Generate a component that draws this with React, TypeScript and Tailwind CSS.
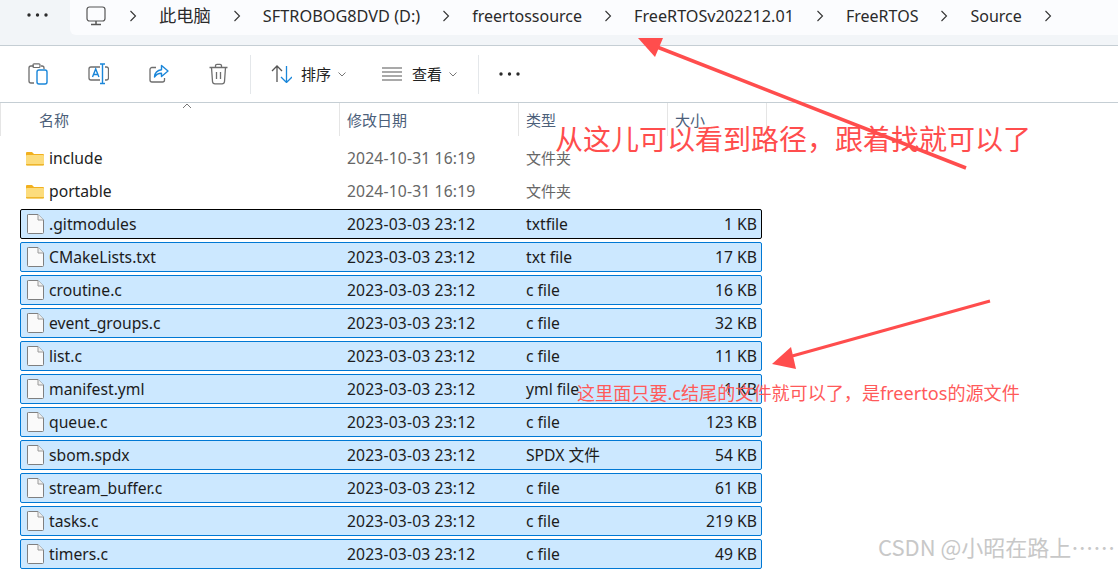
import React from "react";

const BASE = "font-['Noto_Sans','Noto_Sans_CJK_SC',sans-serif]";

const crumbs = [
  { label: "此电脑", size: "text-[17.300px]" },
  { label: "SFTROBOG8DVD (D:)", size: "text-[16.300px]" },
  { label: "freertossource", size: "text-[16px]" },
  { label: "FreeRTOSv202212.01", size: "text-[16.200px]" },
  { label: "FreeRTOS", size: "text-[16px]" },
  { label: "Source", size: "text-[16px]" },
];

const files = [
  { name: ".gitmodules", date: "2023-03-03 23:12", type: "txtfile", size: "1 KB", focus: true },
  { name: "CMakeLists.txt", date: "2023-03-03 23:12", type: "txt file", size: "17 KB" },
  { name: "croutine.c", date: "2023-03-03 23:12", type: "c file", size: "16 KB" },
  { name: "event_groups.c", date: "2023-03-03 23:12", type: "c file", size: "32 KB" },
  { name: "list.c", date: "2023-03-03 23:12", type: "c file", size: "11 KB" },
  { name: "manifest.yml", date: "2023-03-03 23:12", type: "yml file", size: "1 KB" },
  { name: "queue.c", date: "2023-03-03 23:12", type: "c file", size: "123 KB" },
  { name: "sbom.spdx", date: "2023-03-03 23:12", type: "SPDX 文件", size: "54 KB" },
  { name: "stream_buffer.c", date: "2023-03-03 23:12", type: "c file", size: "61 KB" },
  { name: "tasks.c", date: "2023-03-03 23:12", type: "c file", size: "219 KB" },
  { name: "timers.c", date: "2023-03-03 23:12", type: "c file", size: "49 KB" },
];

function Dots() {
  return (
    <svg width="21" height="4" viewBox="0 0 21 4" fill="#2b2b2b">
      <circle cx="2" cy="2" r="1.7" />
      <circle cx="10.5" cy="2" r="1.7" />
      <circle cx="19" cy="2" r="1.7" />
    </svg>
  );
}

function Chevron() {
  return (
    <svg width="8" height="12" viewBox="0 0 8 12" fill="none" stroke="#333" strokeWidth="1.1" className="shrink-0">
      <path d="M1.500 1l5 5-5 5" />
    </svg>
  );
}

function SmallChevron() {
  return (
    <svg width="8" height="5" viewBox="0 0 8 5" fill="none" stroke="#777" strokeWidth="1" className="shrink-0">
      <path d="M.5.5L4 4 7.5.5" />
    </svg>
  );
}

function FolderIcon() {
  return (
    <svg width="18" height="15" viewBox="0 0 18 15" className="shrink-0">
      <path d="M0 2a1 1 0 0 1 1-1h5l2 2h9a1 1 0 0 1 1 1v9a1 1 0 0 1-1 1H1a1 1 0 0 1-1-1z" fill="#f2b01e" />
      <path d="M0 5a1 1 0 0 1 1-1h16a1 1 0 0 1 1 1v8.500a1 1 0 0 1-1 1H1a1 1 0 0 1-1-1z" fill="#fcdc7c" />
      <path d="M0 13h18v.5a1 1 0 0 1-1 1H1a1 1 0 0 1-1-1z" fill="#eeb52c" />
    </svg>
  );
}

function FileIcon() {
  return (
    <svg width="17" height="20" viewBox="0 0 17 20" className="shrink-0">
      <path d="M1.500.5h9.500l5.500 5.500v12.500a1 1 0 0 1-1 1h-14a1 1 0 0 1-1-1v-17.500a.5.5 0 0 1 .5-.5z" fill="#fafafa" stroke="#7f7f7f" />
      <path d="M11 .5v5.500h5.500" fill="#efefef" stroke="#9a9a9a" />
    </svg>
  );
}

function PasteIcon() {
  return (
    <svg width="20" height="22" viewBox="0 0 20 22" fill="none">
      <path d="M6 3H3a2 2 0 0 0-2 2v13a2 2 0 0 0 2 2h3" stroke="#6e6e6e" strokeWidth="1.300" />
      <path d="M5 3.500V1.800a1 1 0 0 1 1-1h5a1 1 0 0 1 1 1v1.700a1 1 0 0 1-1 1H6a1 1 0 0 1-1-1z" stroke="#6e6e6e" strokeWidth="1.200" />
      <path d="M13 3h1a2 2 0 0 1 2 2v1" stroke="#6e6e6e" strokeWidth="1.300" />
      <rect x="9" y="7" width="10" height="14" rx="2" stroke="#1a86d9" strokeWidth="1.400" />
    </svg>
  );
}

function RenameIcon() {
  return (
    <svg width="21" height="22" viewBox="0 0 21 22" fill="none">
      <path d="M12 4H3a2 2 0 0 0-2 2v9a2 2 0 0 0 2 2h9" stroke="#6e6e6e" strokeWidth="1.300" />
      <path d="M17 4h1.500a2 2 0 0 1 2 2v9a2 2 0 0 1-2 2H17" stroke="#6e6e6e" strokeWidth="1.300" />
      <path d="M12 1h5M14.500 1v19.500M12 20.500h5" stroke="#1a86d9" strokeWidth="1.400" />
      <path d="M4.500 14l3.200-8 3.200 8M5.700 11.500h4.200" stroke="#1a86d9" strokeWidth="1.400" />
    </svg>
  );
}

function ShareIcon() {
  return (
    <svg width="20" height="20" viewBox="0 0 20 20" fill="none">
      <path d="M7 3.500H3a2 2 0 0 0-2 2V16a2 2 0 0 0 2 2h10.500a2 2 0 0 0 2-2v-2" stroke="#6e6e6e" strokeWidth="1.300" />
      <path d="M12.500 1.500l6.500 5.500-6.500 5.500V9.300c-3 0-5.300 1.200-7 3.700.3-4 3-6.700 7-7.200z" stroke="#1a86d9" strokeWidth="1.400" strokeLinejoin="round" />
    </svg>
  );
}

function TrashIcon() {
  return (
    <svg width="19" height="22" viewBox="0 0 19 22" fill="none" stroke="#6e6e6e" strokeWidth="1.300">
      <path d="M.5 4.500h18M6.500 4.500V2.800a1.500 1.500 0 0 1 1.500-1.500h3a1.500 1.500 0 0 1 1.500 1.500v1.700" />
      <path d="M2.500 4.500l1 14a2.500 2.500 0 0 0 2.500 2.300h7a2.500 2.500 0 0 0 2.500-2.300l1-14" />
      <path d="M7.500 9v7M11.500 9v7" />
    </svg>
  );
}

function SortIcon() {
  return (
    <svg width="21" height="18" viewBox="0 0 21 18" fill="none" strokeWidth="1.300">
      <path d="M1 6l5-5 5 5M6 1v16" stroke="#555" />
      <path d="M10 12l5.500 5.500L21 12M15.500 1v16" stroke="#1a86d9" />
    </svg>
  );
}

function ViewIcon() {
  return (
    <svg width="20" height="14" viewBox="0 0 20 14" fill="none" stroke="#555" strokeWidth="1.200">
      <path d="M0 1h20M0 5h20M0 9h20M0 13h20" />
    </svg>
  );
}

function HeaderCell({ label, className }: { label: string; className: string }) {
  return (
    <div className={`h-[33px] pt-[6px] pl-[7px] border-r border-[#e5e5e5] text-[#4c607a] shrink-0 ${className}`}>
      {label}
    </div>
  );
}

function Annotations() {
  return (
    <>
      <svg width="1118" height="569" viewBox="0 0 1118 569" className="absolute left-0 top-0 pointer-events-none">
        <path d="M966 168L652 45" stroke="#ff4d4d" strokeWidth="3.500" />
        <path d="M638 38L663 38L655 57z" fill="#ff4d4d" />
        <path d="M990 301L785 358" stroke="#ff4d4d" strokeWidth="3" />
        <path d="M772 364L791 347L796 369z" fill="#ff4d4d" />
      </svg>
      <div className="absolute left-[555px] top-[119px] text-[28px] leading-[40px] text-[#ff4d4d] whitespace-nowrap">
        从这儿可以看到路径，跟着找就可以了
      </div>
      <div className="absolute left-[577px] top-[381px] text-[18.100px] leading-[25px] text-[#ff5a5a] whitespace-nowrap">
        这里面只要.c结尾的文件就可以了，是freertos的源文件
      </div>
      <div className="absolute left-[878px] top-[531px] text-[22px] leading-[30px] text-[#c8c8c8] whitespace-nowrap font-['Noto_Sans_CJK_SC',sans-serif]">
        CSDN @小昭在路上……
      </div>
    </>
  );
}

export default function App() {
  return (
    <div className={`relative w-[1118px] h-[569px] overflow-hidden bg-white text-[15.7px] ${BASE}`}>
      {/* address bar */}
      <div className="flex h-[46px] bg-[#f2f5f8] border-b border-[#c5ced4]">
        <div className="w-[70px] pt-[13px] pl-[27px] shrink-0">
          <Dots />
        </div>
        <div className="flex-1 h-[35px] pl-[16px] pb-[3px] flex items-center gap-[22px] bg-[#fbfcfe] rounded-bl-md text-[#2a2a2a]">
          <svg width="20" height="20" viewBox="0 0 20 20" fill="none" stroke="#555" strokeWidth="1.200" className="shrink-0 mr-[1px]">
            <rect x="1" y="1" width="18" height="14" rx="2.500" />
            <path d="M10 15v3.500M5 18.500h10" strokeWidth="1.500" />
          </svg>
          {crumbs.map((c) => (
            <React.Fragment key={c.label}>
              <Chevron />
              <span className={`whitespace-nowrap ${c.size}`}>{c.label}</span>
            </React.Fragment>
          ))}
          <Chevron />
        </div>
      </div>

      {/* command bar */}
      <div className="flex items-center h-[57px] border-b border-[#c5ced4] text-[15px] text-[#222]">
        <div className="flex items-center gap-[40px] pl-[28px] w-[250px] shrink-0">
          <PasteIcon />
          <RenameIcon />
          <ShareIcon />
          <TrashIcon />
        </div>
        <div className="w-px h-[39px] bg-[#e4e7ea] shrink-0" />
        <div className="flex items-center ml-[20px] w-[111px] shrink-0">
          <SortIcon />
          <span className="ml-[9px] mr-[7px]">排序</span>
          <SmallChevron />
        </div>
        <div className="flex items-center w-[96px] shrink-0">
          <ViewIcon />
          <span className="ml-[10px] mr-[7px]">查看</span>
          <SmallChevron />
        </div>
        <div className="w-px h-[39px] bg-[#e4e7ea] shrink-0" />
        <div className="ml-[20px]">
          <Dots />
        </div>
      </div>

      {/* column header */}
      <div className="relative flex text-[15px] border-l border-[#e5e5e5]">
        <svg width="10" height="6" viewBox="0 0 10 6" fill="none" stroke="#777" className="absolute left-[181px] top-[0px]">
          <path d="M1 5l4-4 4 4" />
        </svg>
        <HeaderCell label="名称" className="w-[339px] pl-[38px]" />
        <HeaderCell label="修改日期" className="w-[179px]" />
        <HeaderCell label="类型" className="w-[149px]" />
        <HeaderCell label="大小" className="w-[99px]" />
      </div>

      {/* file list */}
      <div className="flex flex-col pt-[6px] pl-[20px] w-[762px]">
        {["include", "portable"].map((name) => (
          <div key={name} className="flex items-center h-[33px] px-[5px]">
            <span className="w-[24px] pl-[1px]">
              <FolderIcon />
            </span>
            <span className="w-[298px] text-[#222]">{name}</span>
            <span className="w-[179px] text-[#666] tracking-[0.15px]">2024-10-31 16:19</span>
            <span className="text-[#666] text-[15px]">文件夹</span>
          </div>
        ))}
        <div className="flex flex-col gap-[3px] mt-px">
          {files.map((f) => (
            <div
              key={f.name}
              className={`flex items-center h-[30px] pl-[5px] pr-[4px] pt-[2px] bg-[#cce8ff] border rounded-[2px] text-[#1c1c1c] ${f.focus ? "border-black" : "border-[#0078d4]"}`}
            >
              <span className="w-[23px] pl-[1px] -mt-[2px]">
                <FileIcon />
              </span>
              <span className="w-[298px]">{f.name}</span>
              <span className="w-[179px] tracking-[0.15px]">{f.date}</span>
              <span className="flex-1">{f.type}</span>
              <span>{f.size}</span>
            </div>
          ))}
        </div>
      </div>

      <Annotations />
    </div>
  );
}
